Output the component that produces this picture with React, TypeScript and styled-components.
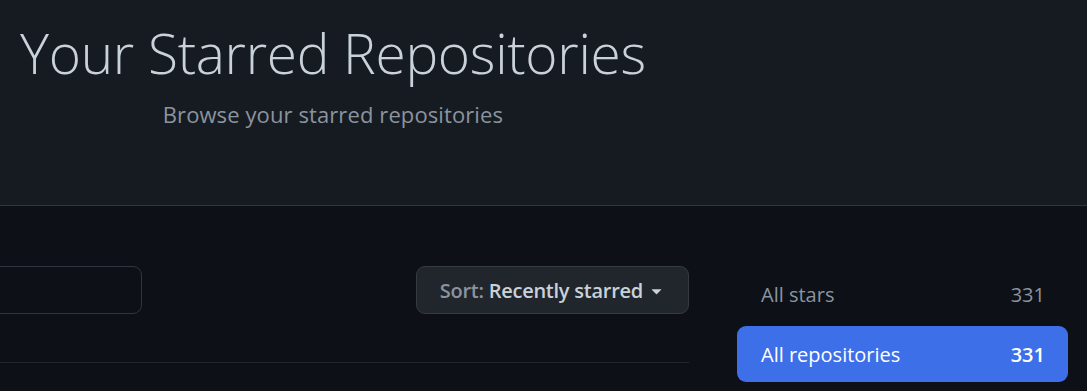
import React from 'react';
import styled, { createGlobalStyle } from 'styled-components';

const GlobalStyle = createGlobalStyle`
  html, body {
    margin: 0;
    padding: 0;
    background: #0d1117;
    overflow: hidden;
  }
  body {
    font-family: 'Open Sans', 'Noto Sans', sans-serif;
    color: #c9d1d9;
  }
`;

const Page = styled.div`
  width: 1087px;
  height: 391px;
  overflow: hidden;
`;

const Hero = styled.header`
  height: 205px;
  background: #161b22;
  border-bottom: 1px solid #30363d;
  padding-left: 20px;
  box-sizing: content-box;
`;

const HeroText = styled.div`
  display: inline-flex;
  flex-direction: column;
  align-items: center;
`;

const Title = styled.h1`
  margin: 0;
  padding-top: 17px;
  font-weight: 300;
  font-size: 55px;
  line-height: 72px;
  color: #c9d1d9;
  letter-spacing: -0.3px;
`;

const Subtitle = styled.p`
  margin: 11px 0 0;
  font-size: 22px;
  line-height: 28px;
  letter-spacing: 0.1px;
  color: #8b949e;
`;

const Main = styled.main`
  display: flex;
  gap: 48px;
  padding-top: 60px;
  margin-left: -20px;
`;

const ListColumn = styled.section`
  width: 709px;
  flex-shrink: 0;
`;

const Toolbar = styled.div`
  display: flex;
  align-items: center;
  justify-content: space-between;
  padding-bottom: 48px;
  border-bottom: 1px solid #21262d;
`;

const SearchInput = styled.input`
  width: 162px;
  height: 48px;
  box-sizing: border-box;
  background: #0d1117;
  border: 1px solid #30363d;
  border-radius: 9px;
  outline: none;
`;

const SortButton = styled.button`
  display: flex;
  align-items: center;
  gap: 3px;
  height: 48px;
  box-sizing: border-box;
  padding: 0 21px 0 23px;
  background: #21262d;
  border: 1px solid #363b42;
  border-radius: 9px;
  font-family: inherit;
  font-size: 20px;
  font-weight: 600;
  letter-spacing: -0.25px;
  color: #c9d1d9;
  cursor: pointer;
`;

const SortLabel = styled.span`
  color: #8b949e;
`;

const Sidebar = styled.nav`
  display: flex;
  flex-direction: column;
  gap: 4px;
  width: 331px;
`;

const FilterItem = styled.a<{ $active?: boolean }>`
  display: flex;
  align-items: center;
  justify-content: space-between;
  height: 56px;
  padding: 0 23px 0 24px;
  border-radius: 9px;
  font-size: 20px;
  text-decoration: none;
  background: ${(p) => (p.$active ? '#3d6fe9' : 'transparent')};
  color: ${(p) => (p.$active ? '#ffffff' : '#8b949e')};
`;

const Count = styled.span<{ $active?: boolean }>`
  font-weight: ${(p) => (p.$active ? 600 : 400)};
`;

const Caret = () => (
  <svg width="21" height="21" viewBox="0 0 16 16" fill="currentColor">
    <path d="m4.427 7.427 3.396 3.396a.25.25 0 0 0 .354 0l3.396-3.396A.25.25 0 0 0 11.396 7H4.604a.25.25 0 0 0-.177.427Z" />
  </svg>
);

const App: React.FC = () => (
  <Page>
    <GlobalStyle />
    <Hero>
      <HeroText>
        <Title>Your Starred Repositories</Title>
        <Subtitle>Browse your starred repositories</Subtitle>
      </HeroText>
    </Hero>
    <Main>
      <ListColumn>
        <Toolbar>
          <SearchInput type="text" aria-label="Search stars" />
          <SortButton type="button">
            <span>
              <SortLabel>Sort: </SortLabel>Recently starred
            </span>
            <Caret />
          </SortButton>
        </Toolbar>
      </ListColumn>
      <Sidebar>
        <FilterItem href="#">
          <span>All stars</span>
          <Count>331</Count>
        </FilterItem>
        <FilterItem href="#" $active>
          <span>All repositories</span>
          <Count $active>331</Count>
        </FilterItem>
      </Sidebar>
    </Main>
  </Page>
);

export default App;
